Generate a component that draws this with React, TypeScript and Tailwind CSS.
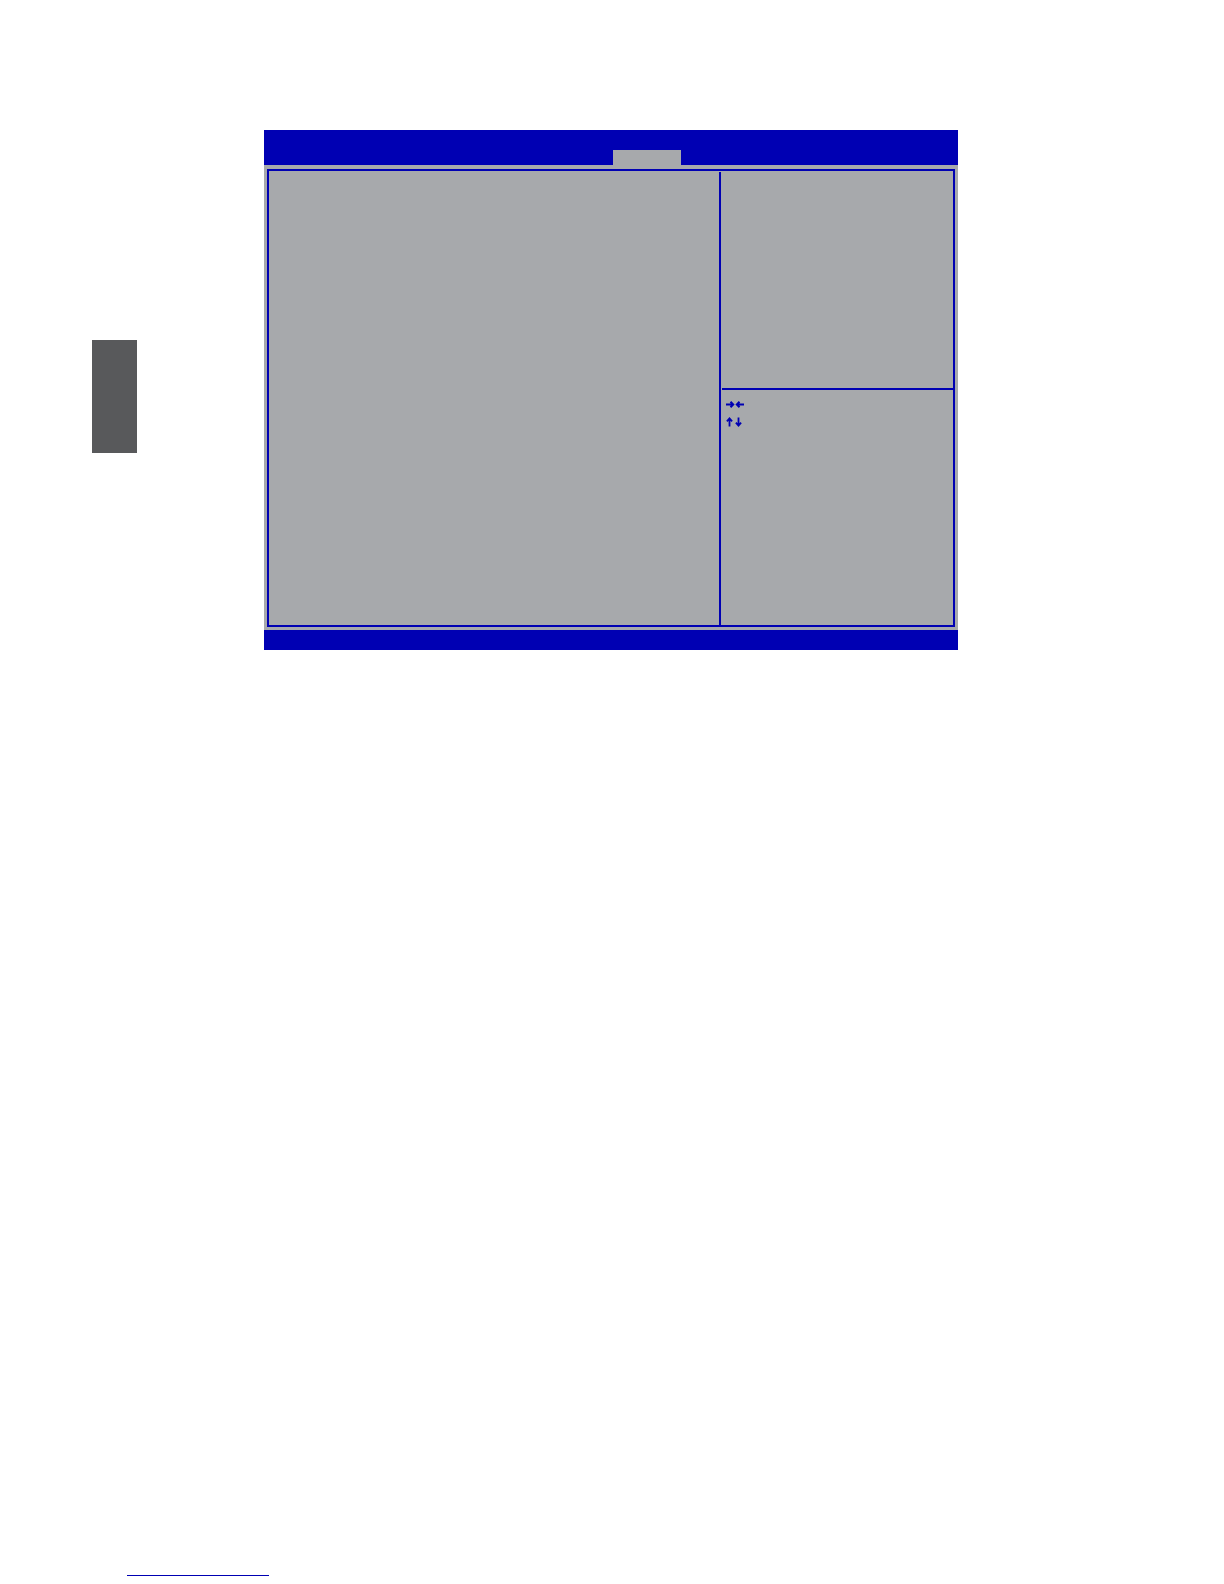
import React from 'react';

const HorizontalKeys: React.FC = () => (
  <svg width="18" height="7" viewBox="0 0 18 7" fill="none" stroke="currentColor" strokeWidth="2" aria-hidden="true">
    <path d="M0 3.5h7M4.5 .8l2.7 2.7-2.7 2.7" />
    <path d="M18 3.5h-7M13.5 .8l-2.7 2.7 2.7 2.7" />
  </svg>
);

const VerticalKeys: React.FC = () => (
  <svg width="18" height="10" viewBox="0 0 18 10" fill="none" stroke="currentColor" strokeWidth="1.8" aria-hidden="true">
    <path d="M3.5 9.5V1.5M.9 4.4l2.6-3 2.6 3" />
    <path d="M12.5 .5v8M9.9 5.6l2.6 3 2.6-3" />
  </svg>
);

const SetupScreen: React.FC = () => (
  <section className="flex-1 flex flex-col bg-[#a7a9ac] text-[#0000b3]">
    <header className="h-[35px] flex items-end bg-[#0000b3] pl-[349px]">
      <button aria-label="Tab" className="w-[68px] h-[15px] bg-[#a7a9ac]" />
    </header>

    <div className="m-[3px] mt-1 flex border-2 border-[#0000b3]">
      <div className="flex-1" />
      <div className="w-[234px] h-[454px] flex flex-col pt-px">
        <div className="flex-1 flex flex-col border-l-2 border-[#0000b3]">
          <div className="h-[216px]" />
          <div className="ml-px h-[2px] bg-[#0000b3]" />
          {/* Key legend */}
          <div className="flex flex-col gap-[9px] pt-[11px] pl-[5px]">
            <HorizontalKeys />
            <VerticalKeys />
          </div>
        </div>
      </div>
    </div>

    <footer className="h-5 bg-[#0000b3]" />
  </section>
);

const App: React.FC = () => {
  return (
    <div className="min-h-screen flex flex-col bg-white font-['Liberation_Sans',sans-serif]">
      <main className="flex items-start pt-[130px] pl-[92px] pr-[266px]">
        {/* Chapter marker */}
        <aside className="w-[45px] h-[113px] mt-[210px] mr-[127px] bg-[#58595b]" />
        <SetupScreen />
      </main>
      <a href="#top" aria-label="Link" className="block w-[142px] h-4 mt-auto mb-2 ml-[127px] border-b border-[#0000b3]" />
    </div>
  );
};

export default App;
